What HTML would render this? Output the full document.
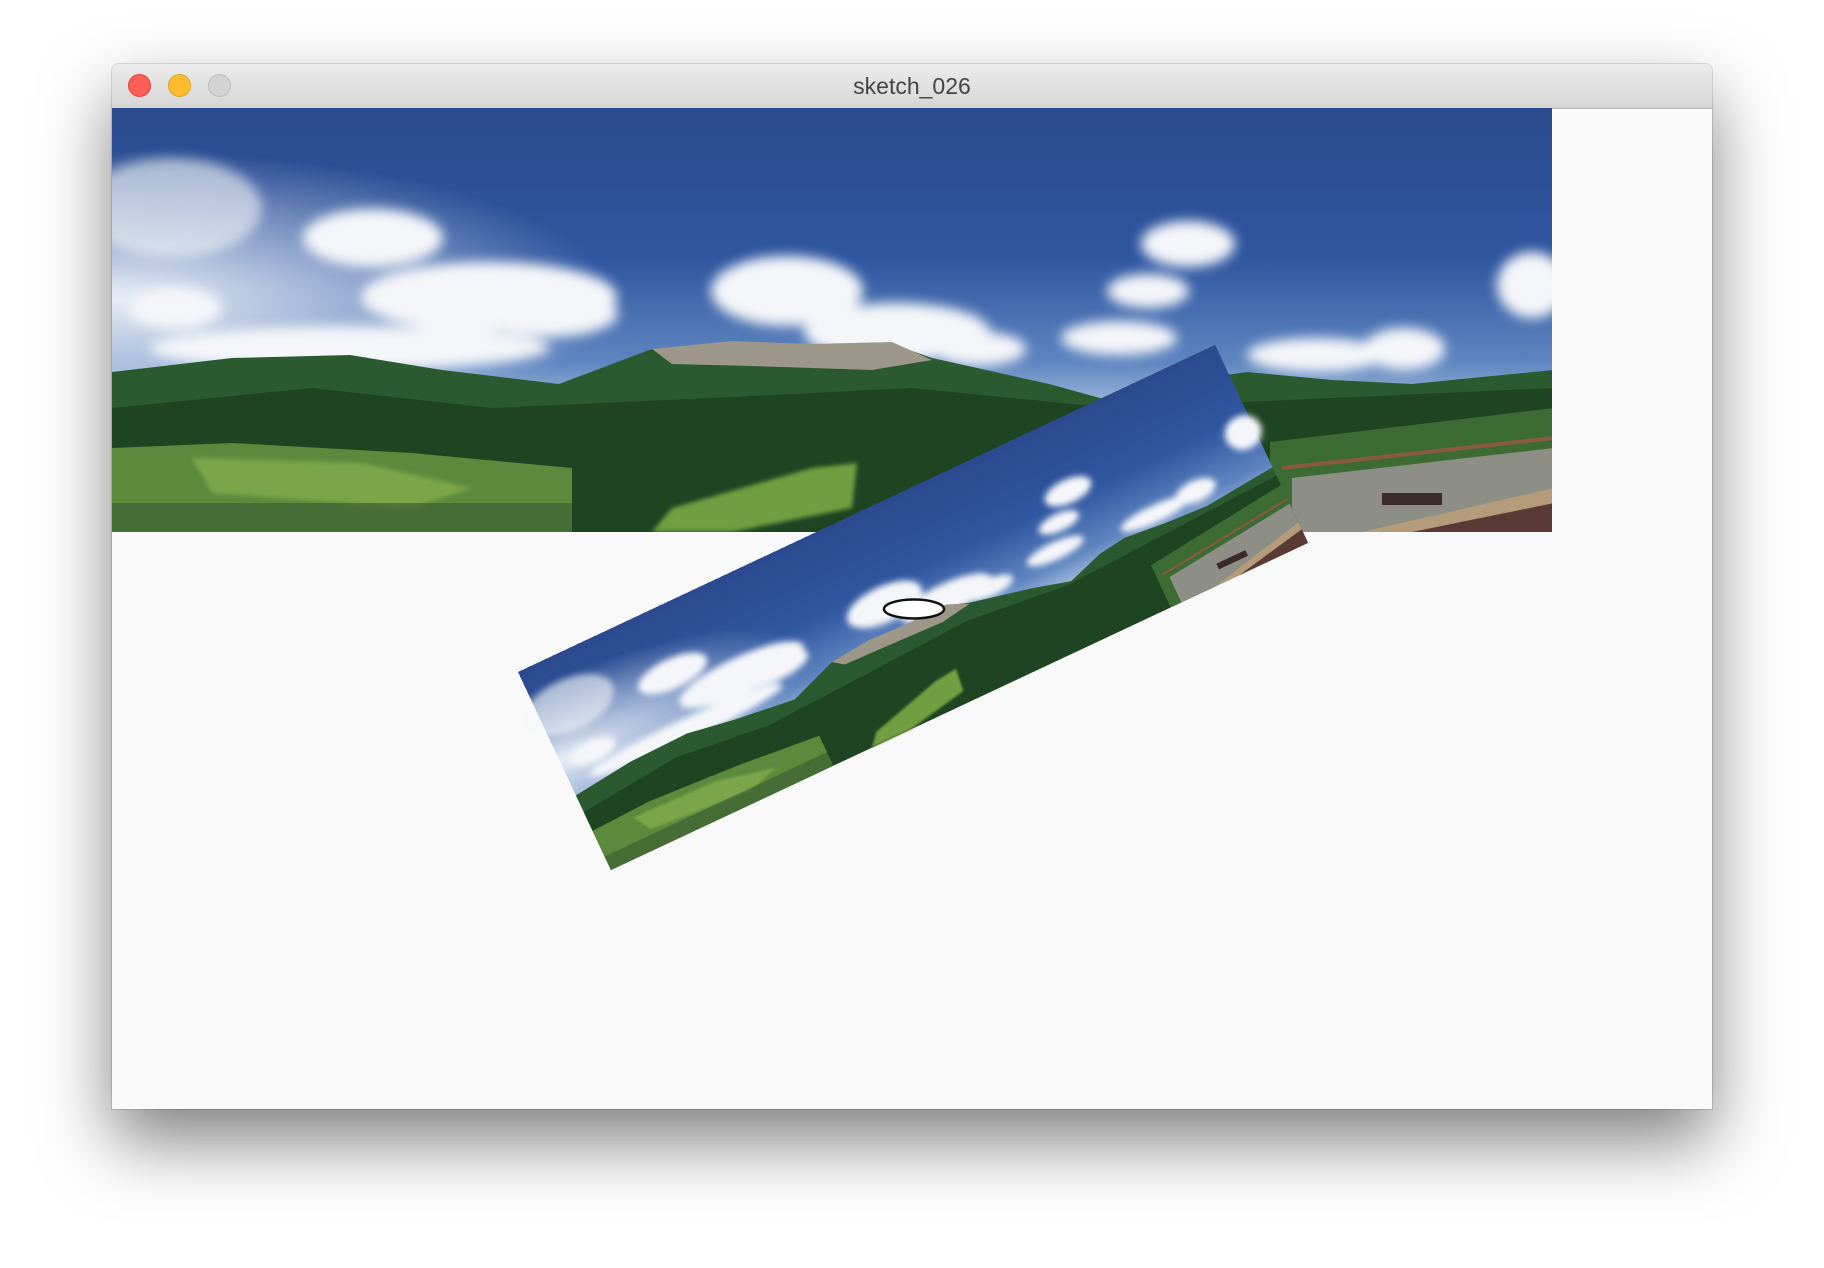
<!DOCTYPE html>
<html><head><meta charset="utf-8"><style>
html,body{margin:0;padding:0;width:1824px;height:1268px;background:#fff;overflow:hidden;font-family:"Liberation Sans",sans-serif}
.win{position:absolute;left:112px;top:64px;width:1600px;height:1045px;background:#f9f9f9;border-radius:7px 7px 0 0;box-shadow:0 32px 70px rgba(0,0,0,0.5),0 0 0 1px rgba(0,0,0,0.12);overflow:hidden}
.title{position:absolute;left:0;top:0;width:100%;height:44px;background:linear-gradient(#ececec,#d6d6d6);border-bottom:1px solid #b8b8b8;text-align:center;line-height:44px;font-size:23px;color:#444}
.dot{position:absolute;top:10px;width:23px;height:23px;border-radius:50%;box-sizing:border-box}
svg{position:absolute;left:0;top:0}
</style></head><body>
<div class="win">
<div class="title">sketch_026
<div class="dot" style="left:16px;background:#fd5f57;border:1px solid #e0443e"></div>
<div class="dot" style="left:56px;background:#febc2e;border:1px solid #dea123"></div>
<div class="dot" style="left:96px;background:#d3d3d3;border:1px solid #bdbdbd"></div>
</div>
</div>
<svg width="1824" height="1268" viewBox="0 0 1824 1268">
<defs>
<linearGradient id="sky" x1="0" y1="0" x2="0" y2="1">
<stop offset="0" stop-color="#2c4a8e"/><stop offset="0.35" stop-color="#2f56a0"/><stop offset="0.6" stop-color="#5f85c0"/><stop offset="0.72" stop-color="#a9c0dd"/></linearGradient>
<radialGradient id="haze" cx="0" cy="0.45" r="0.35"><stop offset="0" stop-color="#e8eef6"/><stop offset="1" stop-color="#e8eef6" stop-opacity="0"/></radialGradient>
<filter id="bl" x="-30%" y="-30%" width="160%" height="160%"><feGaussianBlur stdDeviation="6"/></filter>
<filter id="bl2"><feGaussianBlur stdDeviation="2"/></filter>
<g id="pano">
<rect width="1442" height="424" fill="url(#sky)"/>
<rect width="1442" height="424" fill="url(#haze)"/>
<g fill="#f4f6f9" filter="url(#bl)">
<ellipse cx="63" cy="200" rx="47" ry="21"/><ellipse cx="261" cy="130" rx="70" ry="29"/>
<ellipse cx="377" cy="189" rx="128" ry="35"/><ellipse cx="436" cy="206" rx="70" ry="23"/>
<ellipse cx="675" cy="183" rx="76" ry="35"/><ellipse cx="785" cy="224" rx="93" ry="29"/>
<ellipse cx="867" cy="241" rx="47" ry="17"/><ellipse cx="1076" cy="136" rx="47" ry="23"/>
<ellipse cx="1036" cy="183" rx="41" ry="17"/><ellipse cx="1007" cy="230" rx="58" ry="17"/>
<ellipse cx="1205" cy="247" rx="70" ry="17"/><ellipse cx="1292" cy="241" rx="41" ry="21"/>
<ellipse cx="1420" cy="177" rx="35" ry="33"/><ellipse cx="238" cy="240" rx="200" ry="22"/>
<ellipse cx="60" cy="100" rx="90" ry="50" opacity="0.6"/>
</g>
<path d="M0 264 L120 250 L238 247 L330 262 L447 276 L540 241 L620 235 L700 238 L780 236 L820 250 L937 276 L1010 296 L1080 272 L1135 264 L1220 272 L1300 276 L1380 268 L1442 262 L1442 424 L0 424Z" fill="#2c5a30"/>
<path d="M540 241 L620 233 L700 236 L780 234 L820 252 L760 262 L640 258 L560 256Z" fill="#9c9788"/>
<path d="M0 300 L200 280 L380 300 L600 290 L800 280 L1000 300 L1442 280 L1442 424 L0 424Z" fill="#1f4422"/>
<path d="M0 340 L120 335 L300 345 L460 360 L460 424 L0 424Z" fill="#5b8a3c"/>
<path d="M80 350 L250 355 L360 380 L300 400 L100 385Z" fill="#7aa64a" filter="url(#bl2)"/>
<path d="M560 400 L700 360 L745 355 L740 400 L620 424 L540 424Z" fill="#6f9e3f" filter="url(#bl2)"/>
<rect x="0" y="395" width="460" height="29" fill="#3a5a32" opacity="0.6"/>
<path d="M1158 334 L1442 300 L1442 424 L1158 424Z" fill="#3d6b34"/>
<path d="M1180 370 L1442 340 L1442 424 L1180 424Z" fill="#8d8e86"/>
<path d="M1250 424 L1442 380 L1442 424Z" fill="#b49c7b"/>
<path d="M1300 424 L1442 395 L1442 424Z" fill="#5a3a34"/>
<path d="M1170 360 L1442 330" stroke="#8a5a40" stroke-width="4"/>
<rect x="1270" y="385" width="60" height="12" fill="#3a2a2a"/>
</g>
<clipPath id="cp1"><rect width="1440" height="424"/></clipPath>
</defs>
<g transform="translate(112,108)" clip-path="url(#cp1)"><use href="#pano"/></g>
<g transform="translate(518,672) rotate(-25.14) scale(0.534,0.516)"><use href="#pano"/></g>
<ellipse cx="914" cy="609" rx="30" ry="9.5" fill="#fff" stroke="#111" stroke-width="2.5"/>
</svg>
</body></html>
